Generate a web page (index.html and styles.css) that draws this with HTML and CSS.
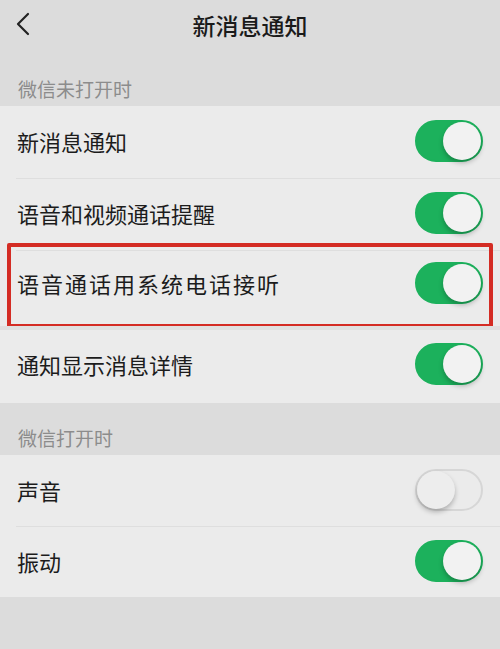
FILE: index.html
```html
<!DOCTYPE html>
<html lang="zh-CN">
<head>
<meta charset="UTF-8" />
<meta name="viewport" content="width=device-width, initial-scale=1" />
<title>新消息通知</title>
<link rel="stylesheet" href="styles.css">
</head>
<body>
<header class="topbar">
  <button class="back-btn" aria-label="返回">
    <svg width="16" height="24" viewBox="0 0 16 24"><path d="M13 2 L3 12 L13 22" fill="none" stroke="#222" stroke-width="2.2" stroke-linecap="round" stroke-linejoin="round"/></svg>
  </button>
  <h1>新消息通知</h1>
</header>

<div class="section-label first">微信未打开时</div>
<div class="group">
  <div class="row">
    <span class="label">新消息通知</span>
    <span class="switch on"><span class="knob"></span></span>
  </div>
  <div class="row">
    <span class="label">语音和视频通话提醒</span>
    <span class="switch on"><span class="knob"></span></span>
  </div>
  <div class="row highlight">
    <span class="label wide">语音通话用系统电话接听</span>
    <span class="switch on"><span class="knob"></span></span>
  </div>
  <div class="row after-highlight">
    <span class="label">通知显示消息详情</span>
    <span class="switch on"><span class="knob"></span></span>
  </div>
</div>

<div class="section-label">微信打开时</div>
<div class="group compact">
  <div class="row">
    <span class="label">声音</span>
    <span class="switch"><span class="knob"></span></span>
  </div>
  <div class="row">
    <span class="label">振动</span>
    <span class="switch on"><span class="knob"></span></span>
  </div>
</div>
</body>
</html>
```

FILE: styles.css
```css
body {
  margin: 0;
  font-family: "Noto Sans CJK SC", "Noto Sans", sans-serif;
  background-color: #dcdcdc;
  color: #1c1c1c;
  min-height: 100vh;
}
.topbar {
  height: 50px;
  display: flex;
  align-items: center;
  justify-content: center;
  position: relative;
}
.topbar h1 {
  margin: 0;
  font-size: 23px;
  font-weight: 500;
  color: #1a1a1a;
}
.back-btn {
  position: absolute;
  left: 15px;
  top: 12px;
  background: none;
  border: none;
  padding: 0;
  cursor: pointer;
}
.section-label {
  height: 52px;
  box-sizing: border-box;
  padding: 22px 0 0 18px;
  font-size: 19px;
  line-height: 26px;
  color: #8c8c8c;
}
.section-label.first {
  height: 56px;
  padding-top: 26px;
}
.group {
  background-color: #ebebeb;
}
.row {
  height: 72px;
  box-sizing: border-box;
  display: flex;
  align-items: center;
  justify-content: space-between;
  padding: 0 17px 2px 17px;
  position: relative;
}
.group.compact .row {
  height: 71px;
}
.row + .row::before {
  content: "";
  position: absolute;
  top: 0;
  left: 16px;
  right: 0;
  height: 1px;
  background-color: #dedede;
}
.label {
  font-size: 22px;
  line-height: 30px;
}
.label.wide {
  letter-spacing: 2px;
}
.row.highlight {
  height: 76px;
  padding-bottom: 10px;
}
.row.highlight::after {
  content: "";
  position: absolute;
  top: -7px;
  bottom: -2px;
  left: 7px;
  right: 7px;
  border: 4px solid #d42c24;
  border-radius: 2px;
}
.row.after-highlight {
  margin-top: 4px;
  height: 73px;
  padding-bottom: 6px;
}
.row.after-highlight::before {
  top: -4px;
  left: 0;
  height: 4px;
  background-color: #e0e0e0;
}
.switch {
  width: 68px;
  height: 42px;
  box-sizing: border-box;
  border-radius: 21px;
  border: 2px solid #d6d6d6;
  background-color: #ebebeb;
  position: relative;
  flex-shrink: 0;
}
.switch.on {
  background-color: #1cb15c;
  border-color: #1cb15c;
}
.knob {
  position: absolute;
  top: 0;
  left: 0;
  width: 38px;
  height: 38px;
  border-radius: 50%;
  background-color: #ededed;
  box-shadow: 0 3px 5px rgba(0,0,0,0.25);
}
.switch.on .knob {
  left: auto;
  right: 0;
  background-color: #f2f2f2;
}
```
